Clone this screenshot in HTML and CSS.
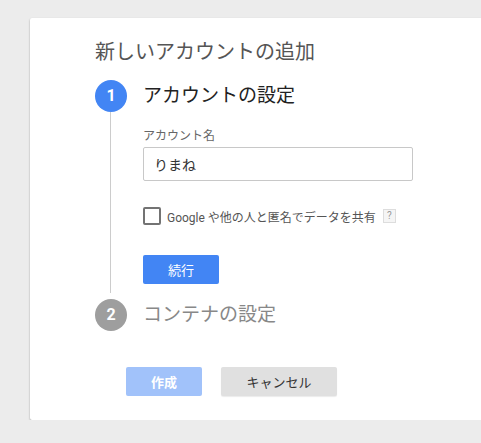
FILE: index.html
```html
<!DOCTYPE html>
<html lang="ja">
<head>
    <meta charset="UTF-8">
    <meta name="viewport" content="width=device-width, initial-scale=1.0">
    <title>新しいアカウントの追加</title>
    <link rel="stylesheet" href="styles.css">
</head>
<body>
    <div class="card">
        <h1 class="card-title">新しいアカウントの追加</h1>

        <div class="step">
            <div class="step-head">
                <span class="step-num active">1</span>
                <span class="step-title">アカウントの設定</span>
            </div>
            <div class="step-body">
                <label class="field-label" for="account-name">アカウント名</label>
                <input type="text" id="account-name" class="field-input" value="りまね" />
                <div class="share-row">
                    <span class="checkbox"></span>
                    <span class="share-text">Google や他の人と匿名でデータを共有</span>
                    <span class="help">?</span>
                </div>
                <button class="btn btn-primary">続行</button>
            </div>
        </div>

        <div class="step">
            <div class="step-head">
                <span class="step-num">2</span>
                <span class="step-title muted">コンテナの設定</span>
            </div>
        </div>

        <div class="actions">
            <button class="btn btn-create">作成</button>
            <button class="btn btn-cancel">キャンセル</button>
        </div>
    </div>
</body>
</html>
```

FILE: styles.css
```css
body {
    margin: 0;
    padding: 18px 0 0 30px;
    background-color: #ececec;
    font-family: Roboto, 'Noto Sans CJK JP', sans-serif;
    color: #333;
    overflow: hidden;
}
.card {
    background: #ffffff;
    height: 402px;
    box-sizing: border-box;
    padding: 20px 0 0 65px;
    border-radius: 2px 0 0 2px;
    box-shadow: 0 1px 2px rgba(0,0,0,0.35);
}
.card-title {
    margin: 0 0 14px 0;
    font-size: 20px;
    line-height: 28px;
    font-weight: normal;
    color: #555;
}
.step-head {
    display: flex;
    align-items: center;
    gap: 16px;
    height: 32px;
}
.step-num {
    width: 32px;
    height: 32px;
    border-radius: 50%;
    background: #9e9e9e;
    color: #fff;
    font-size: 16px;
    font-weight: bold;
    line-height: 32px;
    text-align: center;
}
.step-num.active {
    background: #4285f4;
}
.step-title {
    font-size: 19px;
    line-height: 28px;
    color: #222;
}
.step-title.muted {
    color: #888;
}
.step-body {
    margin: 0 0 6px 15px;
    border-left: 1px solid #ccc;
    padding: 16px 0 9px 32px;
}
.field-label {
    display: block;
    font-size: 12px;
    line-height: 16px;
    color: #666;
    margin-bottom: 3px;
}
.field-input {
    display: block;
    width: 270px;
    height: 34px;
    box-sizing: border-box;
    border: 1px solid #c8c8c8;
    border-radius: 2px;
    padding: 0 10px;
    font-family: inherit;
    font-size: 14px;
    color: #333;
    outline: none;
}
.share-row {
    display: flex;
    align-items: center;
    margin-top: 26px;
    height: 18px;
}
.checkbox {
    width: 18px;
    height: 18px;
    box-sizing: border-box;
    border: 2px solid #737373;
    border-radius: 2px;
}
.share-text {
    margin-left: 6px;
    font-size: 12px;
    color: #555;
}
.help {
    margin-left: 7px;
    width: 13px;
    height: 14px;
    box-sizing: border-box;
    border: 1px solid #ddd;
    background: #f5f5f5;
    color: #999;
    font-size: 10px;
    line-height: 12px;
    text-align: center;
}
.btn {
    height: 29px;
    border: none;
    border-radius: 2px;
    font-family: inherit;
    font-size: 13px;
    cursor: pointer;
    padding: 0;
}
.btn-primary {
    display: block;
    margin-top: 30px;
    width: 76px;
    background: #4285f4;
    color: #fff;
}
.actions {
    display: flex;
    gap: 19px;
    margin: 36px 0 0 31px;
}
.btn-create {
    width: 76px;
    background: #a1c2fa;
    color: #fff;
    font-weight: bold;
}
.btn-cancel {
    width: 116px;
    background: #e0e0e0;
    color: #333;
    box-shadow: 0 1px 1px rgba(0,0,0,0.08);
}
```
